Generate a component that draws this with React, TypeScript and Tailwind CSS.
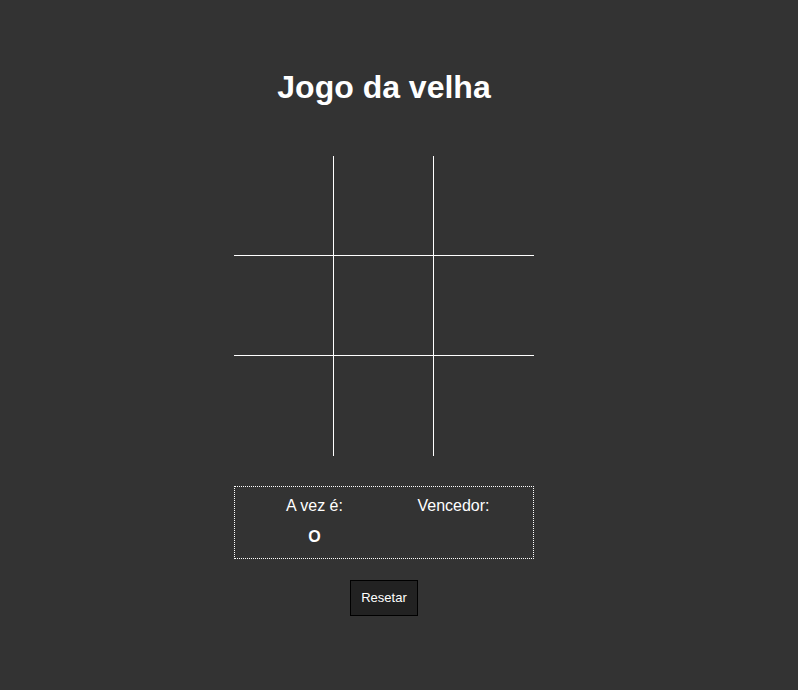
import React, { useState } from 'react';

type Cell = 'X' | 'O' | '';

export default function App() {
  const [board, setBoard] = useState<Cell[]>(Array(9).fill(''));
  const [turn, setTurn] = useState<'X' | 'O'>('O');
  const [winner, setWinner] = useState('');

  const lines = [
    [0, 1, 2], [3, 4, 5], [6, 7, 8],
    [0, 3, 6], [1, 4, 7], [2, 5, 8],
    [0, 4, 8], [2, 4, 6],
  ];

  const play = (i: number) => {
    if (board[i] || winner) return;
    const next = [...board];
    next[i] = turn;
    setBoard(next);
    const won = lines.find(([a, b, c]) => next[a] && next[a] === next[b] && next[a] === next[c]);
    if (won) setWinner(turn);
    else setTurn(turn === 'O' ? 'X' : 'O');
  };

  const reset = () => {
    setBoard(Array(9).fill(''));
    setTurn('O');
    setWinner('');
  };

  // borders only on the inner edges of the grid
  const cellBorder = (i: number) => {
    const col = i % 3;
    const row = Math.floor(i / 3);
    return `${col < 2 ? 'border-r' : ''} ${row < 2 ? 'border-b' : ''}`;
  };

  return (
    <div className="min-h-[690px] bg-[#333333] text-white font-['Liberation_Sans',Arial,sans-serif] flex flex-col items-center pr-[30px]">
      <h1 className="mt-[69px] text-[32px] leading-[37px] font-bold">Jogo da velha</h1>

      {/* Board */}
      <div className="mt-[50px] grid grid-cols-3 w-[300px] h-[300px]">
        {board.map((cell, i) => (
          <div
            key={i}
            onClick={() => play(i)}
            className={`w-[100px] h-[100px] border-white flex items-center justify-center text-5xl cursor-pointer ${cellBorder(i)}`}
          >
            {cell}
          </div>
        ))}
      </div>

      {/* Info */}
      <div className="mt-[30px] w-[300px] h-[73px] border border-dotted border-white pt-[10px] pb-[9px] flex justify-center gap-[39px]">
        <div className="w-[100px] flex flex-col items-center">
          <span className="text-[16px] leading-[18px]">A vez é:</span>
          <span className="mt-[13px] text-[16px] leading-[18px] font-bold">{winner ? '' : turn}</span>
        </div>
        <div className="w-[100px] flex flex-col items-center">
          <span className="text-[16px] leading-[18px]">Vencedor:</span>
          <span className="mt-[13px] text-[16px] leading-[18px] font-bold">{winner}</span>
        </div>
      </div>

      <button
        onClick={reset}
        className="mt-[21px] w-[68px] h-[36px] bg-[#222222] border border-black text-white text-[13px] leading-[15px] pb-[2px]"
      >
        Resetar
      </button>
    </div>
  );
}
